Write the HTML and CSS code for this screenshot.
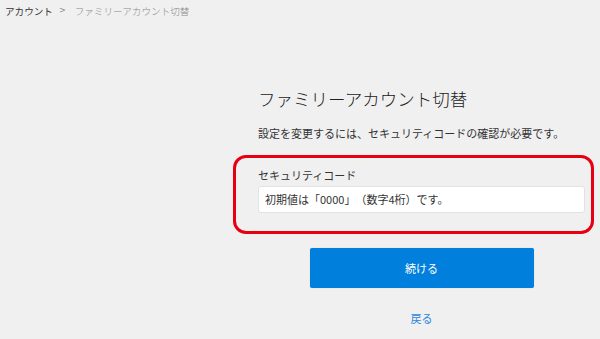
FILE: index.html
```html
<!DOCTYPE html>
<html lang="ja">
<head>
<meta charset="utf-8">
<link rel="stylesheet" href="styles.css">
</head>
<body>
<nav class="crumbs">
  <span class="crumb-link">アカウント</span>
  <span class="crumb-sep">&gt;</span>
  <span class="crumb-current">ファミリーアカウント切替</span>
</nav>
<main class="panel">
  <h1 class="title">ファミリーアカウント切替</h1>
  <p class="lead">設定を変更するには、セキュリティコードの確認が必要です。</p>
  <div class="highlight">
    <label class="field-label">セキュリティコード</label>
    <div class="input">初期値は「0000」（数字4桁）です。</div>
  </div>
  <div class="actions">
    <button class="btn-primary">続ける</button>
    <a class="back">戻る</a>
  </div>
</main>
</body>
</html>
```
FILE: styles.css
```css
html, body {
  margin: 0;
  padding: 0;
  background: #f0f0f0;
  font-family: "Noto Sans CJK JP", "Noto Sans", sans-serif;
  color: #333;
  text-spacing-trim: space-all;
}
.crumbs {
  display: flex;
  align-items: center;
  padding: 4px 5px;
  height: 14px;
  font-size: 9.6px;
  line-height: 14px;
}
.crumb-link { color: #333; font-weight: 400; }
.crumb-sep { color: #888; margin: 0 9px 0 6px; font-family: "DejaVu Sans", sans-serif; font-size: 8px; }
.crumb-current { color: #888; font-weight: 300; }
.panel {
  margin: 65px 0 0 258px;
  width: 327px;
}
.title {
  margin: 0;
  font-size: 17.5px;
  font-weight: 300;
  line-height: 24px;
  color: #222;
}
.lead {
  margin: 14px 0 0;
  font-size: 11px;
  line-height: 16px;
  color: #333;
}
.highlight {
  margin: 14px -9px 0 -25px;
  padding: 9px 6px 18px 22px;
  border: 3px solid #e60012;
  border-radius: 13px;
}
.field-label {
  display: block;
  font-size: 11px;
  line-height: 16px;
  color: #333;
}
.input {
  margin-top: 3px;
  height: 25px;
  line-height: 25px;
  padding: 0 6px;
  background: #fff;
  border: 1px solid #e2e2e2;
  border-radius: 3px;
  font-size: 11px;
  color: #333;
}
.actions {
  display: flex;
  flex-direction: column;
  align-items: center;
}
.btn-primary {
  margin-top: 14px;
  width: 224px;
  height: 40px;
  border: none;
  border-radius: 2px;
  background: #007fdc;
  color: #fff;
  font-family: inherit;
  font-size: 11px;
  box-shadow: 0 0 1px rgba(0,0,0,0.25);
}
.back {
  margin-top: 22px;
  font-size: 11px;
  line-height: 16px;
  color: #2f86dc;
}
```
